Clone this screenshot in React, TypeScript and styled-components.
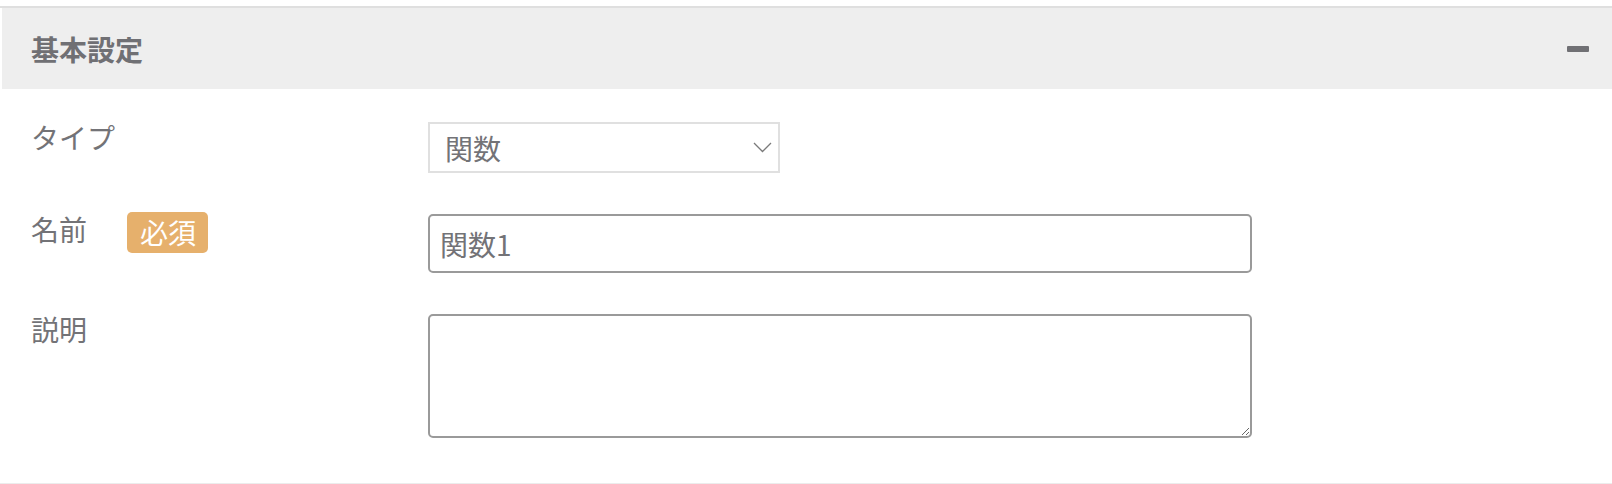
import React from "react";
import styled, { createGlobalStyle } from "styled-components";

const GlobalStyle = createGlobalStyle`
  html, body {
    margin: 0;
    padding: 0;
    background: #ffffff;
  }
  body {
    font-family: "Noto Sans CJK JP", "Noto Sans", sans-serif;
  }
  * { box-sizing: border-box; }
`;

const Page = styled.div`
  padding-top: 6px;
  width: 1612px;
`;

const Panel = styled.section`
  border-top: 2px solid #dfdfdf;
  border-bottom: 1px solid #ececec;
`;

const Header = styled.div`
  height: 81px;
  margin-left: 2px;
  background: #eeeeee;
  display: flex;
  align-items: center;
  justify-content: space-between;
  padding: 0 23px 0 29px;
`;

const Title = styled.h2`
  margin: 0;
  font-size: 28px;
  font-weight: 700;
  color: #707074;
  line-height: 28px;
`;

const CollapseButton = styled.button`
  width: 22px;
  height: 6px;
  padding: 0;
  border: none;
  border-radius: 1px;
  background: #707074;
  cursor: pointer;
`;

const Body = styled.div`
  padding: 33px 0 45px 31px;
  display: flex;
  flex-direction: column;
  gap: 41px;
`;

const Row = styled.div`
  display: flex;
  align-items: flex-start;
`;

const LabelCell = styled.div`
  width: 397px;
  display: flex;
  align-items: flex-start;
  gap: 40px;
  padding-top: 1px;
`;

const Label = styled.label`
  font-size: 28px;
  line-height: 28px;
  color: #737377;
`;

const Badge = styled.span`
  display: inline-block;
  margin-top: -3px;
  height: 41px;
  padding: 0 12px 0 13px;
  border-radius: 5px;
  background: #e6b06c;
  color: #ffffff;
  font-size: 28px;
  line-height: 41px;
`;

const SelectBox = styled.div`
  width: 352px;
  height: 51px;
  border: 2px solid #e0e0e0;
  display: flex;
  align-items: center;
  padding: 0 6px 0 15px;
  background: #fff;
`;

const NativeSelect = styled.select`
  flex: 1;
  appearance: none;
  border: none;
  outline: none;
  background: transparent;
  font-family: "Noto Sans CJK JP", "Noto Sans", sans-serif;
  font-size: 28px;
  color: #737377;
  padding: 0;
  height: 100%;
`;

const TextInput = styled.input`
  width: 824px;
  height: 59px;
  border: 2px solid #9a9a9a;
  border-radius: 5px;
  padding: 0 10px;
  font-family: "Noto Sans CJK JP", "Noto Sans", sans-serif;
  font-size: 28px;
  color: #737377;
  outline: none;
`;

const TextArea = styled.textarea`
  width: 824px;
  height: 124px;
  border: 2px solid #9a9a9a;
  border-radius: 5px;
  padding: 8px 10px;
  font-family: "Noto Sans CJK JP", "Noto Sans", sans-serif;
  font-size: 28px;
  color: #737377;
  outline: none;
  display: block;
`;

const Chevron = () => (
  <svg width="19" height="11" viewBox="0 0 19 11" aria-hidden="true">
    <polyline points="1,1 9.5,9.5 18,1" fill="none" stroke="#7a7a7a" strokeWidth="1.3" />
  </svg>
);

export default function App() {
  return (
    <>
      <GlobalStyle />
      <Page>
        <Panel>
          <Header>
            <Title>基本設定</Title>
            <CollapseButton aria-label="折りたたむ" />
          </Header>
          <Body>
            <Row>
              <LabelCell>
                <Label>タイプ</Label>
              </LabelCell>
              <SelectBox>
                <NativeSelect defaultValue="function">
                  <option value="function">関数</option>
                </NativeSelect>
                <Chevron />
              </SelectBox>
            </Row>
            <Row>
              <LabelCell>
                <Label>名前</Label>
                <Badge>必須</Badge>
              </LabelCell>
              <TextInput defaultValue="関数1" />
            </Row>
            <Row>
              <LabelCell>
                <Label>説明</Label>
              </LabelCell>
              <TextArea />
            </Row>
          </Body>
        </Panel>
      </Page>
    </>
  );
}
